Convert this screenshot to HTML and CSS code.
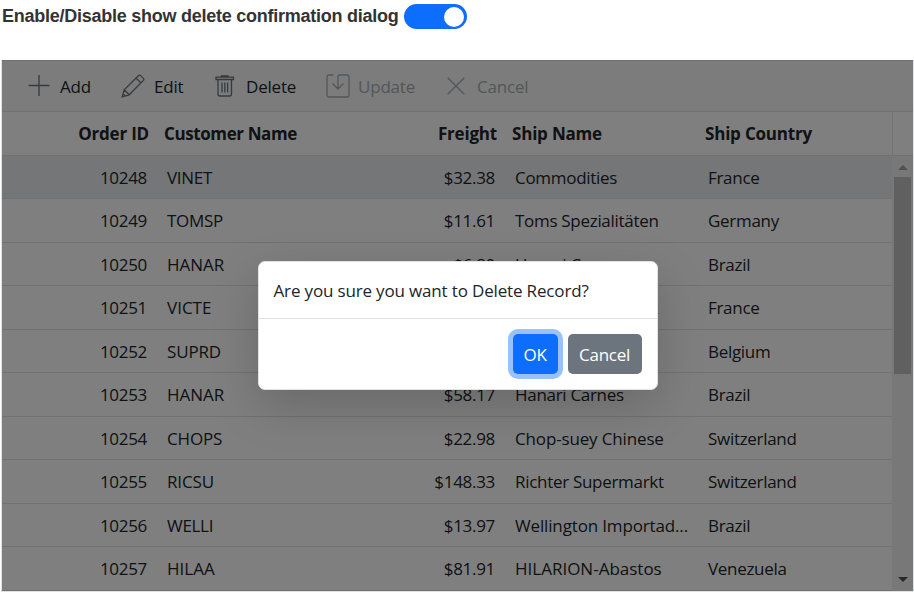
FILE: index.html
```html
<!DOCTYPE html>
<html lang="en">
<head>
<meta charset="utf-8">
<title>Delete confirmation</title>
<link rel="stylesheet" href="styles.css">
</head>
<body>
<div class="option"><label>Enable/Disable show delete confirmation dialog</label><span class="switch"><span class="handle"></span></span></div>
<div class="grid">
  <div class="toolbar">
    <div class="tool add"><svg width="22" height="22" viewBox="0 0 22 22"><path d="M11 0v21M.5 10.5h21"/></svg><span>Add</span></div>
    <div class="tool edit"><svg width="24" height="24" viewBox="0 0 24 24"><path d="M1.2 22.8l2-7L17.6 1.5q1-.8 2 .1l2.8 2.8q.9 1 0 2L8.2 20.8zM3.2 15.8l5 5M15 4l5 5M2 19.8l2.2 2.2"/></svg><span>Edit</span></div>
    <div class="tool delete"><svg width="20" height="22" viewBox="0 0 20 22"><path d="M1 2.2h17.5v2.3H1zM6.5 2V.8h6.5V2M3 4.7V19q0 2 2 2h9.500q2 0 2-2V4.700M7 7.500v10M9.800 7.500v10M12.600 7.500v10"/></svg><span>Delete</span></div>
    <div class="tool update off"><svg width="24" height="24" viewBox="0 0 24 24"><path d="M7.500 1H3Q1 1 1 3v18q0 2 2 2h18q2 0 2-2V3q0-2-2-2h-7q-2 0-2 2v12M6.500 9.500l5.500 5.500 5.500-5.500"/></svg><span>Update</span></div>
    <div class="tool cancel off"><svg width="18" height="18" viewBox="0 0 18 18"><path d="M.7.7l16.600 16.600M17.300.7L.7 17.300"/></svg><span>Cancel</span></div>
  </div>
  <div class="row head"><div class="num">Order ID</div><div>Customer Name</div><div class="num">Freight</div><div>Ship Name</div><div>Ship Country</div><div class="gutter"></div></div>
  <div class="content">
    <div class="rows">
      <div class="row selected"><div class="num">10248</div><div>VINET</div><div class="num">$32.38</div><div>Commodities</div><div>France</div></div>
      <div class="row"><div class="num">10249</div><div>TOMSP</div><div class="num">$11.61</div><div>Toms Spezialitäten</div><div>Germany</div></div>
      <div class="row"><div class="num">10250</div><div class="wider">HANAR</div><div class="num">$6.80</div><div>Hanari Carnes</div><div>Brazil</div></div>
      <div class="row"><div class="num">10251</div><div class="wider">VICTE</div><div class="num">$41.34</div><div>Victuailles en stock</div><div>France</div></div>
      <div class="row"><div class="num">10252</div><div class="wide">SUPRD</div><div class="num">$51.30</div><div>Suprêmes délices</div><div>Belgium</div></div>
      <div class="row"><div class="num">10253</div><div class="wider">HANAR</div><div class="num">$58.17</div><div>Hanari Carnes</div><div>Brazil</div></div>
      <div class="row"><div class="num">10254</div><div class="wide">CHOPS</div><div class="num">$22.98</div><div class="wide">Chop-suey Chinese</div><div>Switzerland</div></div>
      <div class="row"><div class="num">10255</div><div class="wide">RICSU</div><div class="num">$148.33</div><div>Richter Supermarkt</div><div>Switzerland</div></div>
      <div class="row"><div class="num">10256</div><div>WELLI</div><div class="num">$13.97</div><div class="wide">Wellington Importad...</div><div>Brazil</div></div>
      <div class="row"><div class="num">10257</div><div class="wider">HILAA</div><div class="num">$81.91</div><div class="wider">HILARION-Abastos</div><div>Venezuela</div></div>
    </div>
    <div class="scrollbar"><i class="up"></i><div class="thumb"></div><i class="down"></i></div>
  </div>
  <div class="overlay">
    <div class="dialog">
      <div class="message"><span>Are you sure you want to Delete Record?</span></div>
      <div class="buttons"><button class="ok">OK</button><button class="dismiss">Cancel</button></div>
    </div>
  </div>
</div>
</body>
</html>
```

FILE: styles.css
```css
* { box-sizing: border-box; }
body {
  margin: 0;
  height: 592px;
  overflow: hidden;
  background: #fff;
  color: #212529;
  font: 17px/24px "Open Sans", sans-serif;
  letter-spacing: -0.3px;
}
.option {
  display: flex;
  height: 60px;
  padding: 4px 0 0 2px;
  gap: 6px;
  color: #333;
  font: bold 18px/25px "Liberation Sans", sans-serif;
  letter-spacing: -0.25px;
}
.option label { width: 396px; white-space: nowrap; }
.switch {
  display: flex;
  justify-content: flex-end;
  align-items: center;
  width: 63px;
  height: 25px;
  padding-right: 3px;
  border-radius: 13px;
  background: #0d6efd;
}
.handle { width: 20px; height: 20px; border-radius: 50%; background: #fff; }
.grid {
  position: relative;
  width: 911px;
  height: 531px;
  margin-left: 2px;
  outline: 1px solid #dee2e6;
  clip-path: inset(0 -1px -1px -1px);
}
.toolbar {
  display: flex;
  height: 52px;
  border-top: 1px solid #dee2e6;
  border-bottom: 1px solid #dee2e6;
  background: #f8f9fa;
  letter-spacing: -0.2px;
}
.tool { display: flex; align-items: center; height: 50px; }
.tool svg { fill: none; stroke: #6c757d; stroke-width: 1.3; }
.add { width: 93px; padding-left: 26px; gap: 10px; }
.edit { width: 94px; padding-left: 26px; gap: 9px; }
.delete { width: 111px; padding-left: 26px; gap: 11px; }
.update { width: 121px; padding-left: 26px; gap: 8px; }
.cancel { padding-left: 26px; gap: 12px; }
.tool span { padding-top: 1px; }
.off { color: #a6acb1; }
.off svg { stroke: #a6acb1; }
.row {
  display: grid;
  grid-template-columns: 155px 238px 110px 193px 194px;
  height: 43.5px;
  align-items: center;
  border-bottom: 1px solid #dee2e6;
  background: #fff;
  white-space: nowrap;
}
.row > div { padding: 2px 10px 0; }
.row .num { text-align: right; padding-right: 10px; }
.row .wide { letter-spacing: -0.15px; }
.row .wider { letter-spacing: 0; }
.selected { background: #e9ecef; }
.head {
  grid-template-columns: 155px 238px 110px 193px 194px 21px;
  height: 43.5px;
  font-weight: 700;
  letter-spacing: -0.2px;
}
.head > div { padding: 0 7px; }
.head > div:nth-child(2) { letter-spacing: -0.4px; }
.head .num { padding-right: 8px; }
.head .gutter { height: 43px; border-left: 1px solid #dee2e6; padding: 0; }
.content { display: flex; height: 435.5px; }
.rows { width: 890px; }
.scrollbar {
  display: flex;
  flex-direction: column;
  align-items: center;
  width: 21px;
  padding: 9px 0 9px;
  background: #f1f1f1;
}
.up, .down { border: 5px solid transparent; border-top: 0; border-bottom-color: #a3a3a3; }
.down { margin-top: auto; border-top: 5px solid #505050; border-bottom: 0; }
.thumb { width: 17px; height: 197px; margin-top: 7.5px; background: #c1c1c1; }
.overlay {
  position: absolute;
  inset: 0;
  display: flex;
  align-items: center;
  justify-content: center;
  background: rgba(0, 0, 0, .5);
}
.dialog {
  width: 400px;
  height: 129px;
  border: 1px solid #dee2e6;
  border-radius: 7px;
  background: #fff;
  box-shadow: 0 16px 48px rgba(0, 0, 0, .175);
}
.message {
  height: 57px;
  padding: 17px 15px 0;
  border-bottom: 1px solid #dee2e6;
  letter-spacing: -0.16px;
  white-space: nowrap;
}
.buttons { display: flex; justify-content: flex-end; gap: 10px; padding: 15px; }
button {
  height: 40px;
  padding: 1px 0 0;
  border: 0;
  border-radius: 5px;
  color: #fff;
  font: inherit;
  letter-spacing: inherit;
}
.ok { width: 45px; background: #0d6efd; box-shadow: 0 0 0 5px #98c1fe; }
.dismiss { width: 74px; background: #6c757d; }
```
